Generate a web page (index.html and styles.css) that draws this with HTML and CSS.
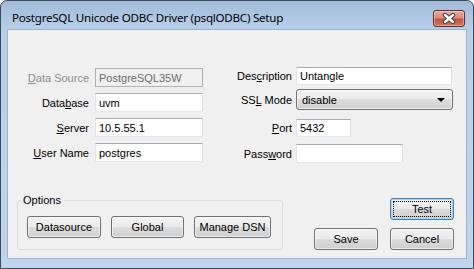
FILE: index.html
```html
<!DOCTYPE html>
<html lang="en">
<head>
    <meta charset="UTF-8">
    <title>PostgreSQL Unicode ODBC Driver (psqlODBC) Setup</title>
    <link rel="stylesheet" href="styles.css">
</head>
<body>
    <div class="window">
        <div class="titlebar">
            <span class="title">PostgreSQL Unicode ODBC Driver (psqlODBC) Setup</span>
            <div class="close">
                <svg width="14" height="11" viewBox="0 0 14 11">
                    <path d="M3 2 L11 9 M11 2 L3 9" stroke="#4b4040" stroke-width="4.4" stroke-linecap="round"/>
                    <path d="M3 2 L11 9 M11 2 L3 9" stroke="#fff" stroke-width="2.4" stroke-linecap="round"/>
                </svg>
            </div>
        </div>

        <div class="client">
            <div class="form">
                <div class="fields left">
                    <div class="row">
                        <span class="label disabled"><u>D</u>ata Source</span>
                        <div class="field wide is-disabled">PostgreSQL35W</div>
                    </div>
                    <div class="row">
                        <span class="label">Data<u>b</u>ase</span>
                        <div class="field wide">uvm</div>
                    </div>
                    <div class="row">
                        <span class="label"><u>S</u>erver</span>
                        <div class="field wide">10.5.55.1</div>
                    </div>
                    <div class="row">
                        <span class="label"><u>U</u>ser Name</span>
                        <div class="field wide">postgres</div>
                    </div>
                </div>

                <div class="fields right">
                    <div class="row desc">
                        <span class="label">Des<u>c</u>ription</span>
                        <div class="field long">Untangle</div>
                    </div>
                    <div class="row ssl">
                        <span class="label">SS<u>L</u> Mode</span>
                        <div class="select">
                            <span>disable</span>
                            <span class="arrow"></span>
                        </div>
                    </div>
                    <div class="row port">
                        <span class="label"><u>P</u>ort</span>
                        <div class="field short">5432</div>
                    </div>
                    <div class="row pass">
                        <span class="label">Pass<u>w</u>ord</span>
                        <div class="field medium"></div>
                    </div>
                </div>
            </div>

            <div class="bottom">
                <fieldset class="options">
                    <legend>Options</legend>
                    <button class="btn ds">Datasource</button>
                    <button class="btn global">Global</button>
                    <button class="btn dsn">Manage DSN</button>
                </fieldset>

                <div class="actions">
                    <button class="btn default">Test</button>
                    <div class="action-row">
                        <button class="btn">Save</button>
                        <button class="btn">Cancel</button>
                    </div>
                </div>
            </div>
        </div>
    </div>
</body>
</html>
```

FILE: styles.css
```css
body {
    margin: 0;
    background-color: #fff;
    font-family: "Liberation Sans", Arial, sans-serif;
    font-size: 11px;
    color: #000;
}

.window {
    width: 474px;
    height: 269px;
    box-sizing: border-box;
    border: 1px solid #3e4a58;
    border-radius: 7px 7px 0 0;
    padding: 0 7px 10px 7px;
    background: linear-gradient(#a2bbd9, #b7cfe9 28px, #bfd5ee);
    display: flex;
    flex-direction: column;
}

.titlebar {
    height: 29px;
    display: flex;
    justify-content: space-between;
    align-items: flex-start;
    padding: 0 1px 0 4px;
}

.title {
    font-family: "Noto Sans", sans-serif;
    font-size: 11.6px;
    letter-spacing: -0.25px;
    line-height: 16px;
    margin-top: 9px;
}

.close {
    width: 32px;
    height: 17px;
    margin-top: 9px;
    box-sizing: border-box;
    border: 1px solid #6e2c24;
    border-radius: 3px;
    background: linear-gradient(#e5aba1, #d98a7a 45%, #c6523f 55%, #d0775f);
    box-shadow: inset 0 0 0 1px rgba(255, 255, 255, 0.35);
    display: flex;
    align-items: center;
    justify-content: center;
}

.client {
    height: 228px;
    background-color: #f0f0f0;
    box-shadow: 0 0 0 1px #9fb3cb;
    display: flex;
    flex-direction: column;
}

.form {
    display: flex;
    padding-top: 37px;
}

.fields {
    display: flex;
    flex-direction: column;
}

.fields.left {
    margin-top: 1px;
    row-gap: 6px;
}

.row {
    display: flex;
    align-items: center;
}

.label {
    text-align: right;
    white-space: nowrap;
}

.left .label {
    width: 81px;
    margin-right: 6px;
}

.right .label {
    width: 89px;
    margin-right: 4px;
}

.label.disabled {
    color: #8d8d8d;
}

.field {
    box-sizing: border-box;
    height: 19px;
    padding: 0 3px;
    background-color: #fff;
    border: 1px solid;
    border-color: #abadb3 #dbdfe6 #e3e9ef #e2e3ea;
    display: flex;
    align-items: center;
}

.field.is-disabled {
    background-color: #f0f0f0;
    border-color: #adb2b5;
    color: #6d6d6d;
}

.field.wide { width: 108px; }
.field.long { width: 156px; height: 18px; }
.field.short { width: 55px; height: 18px; }
.field.medium { width: 107px; }

.row.ssl { margin-top: 4px; }
.row.port { margin-top: 9px; }
.row.pass { margin-top: 7px; }

.select {
    box-sizing: border-box;
    width: 157px;
    height: 21px;
    padding: 0 7px 0 5px;
    border: 1px solid #707070;
    border-radius: 3px;
    background: linear-gradient(#f2f2f2, #ebebeb 50%, #dddddd 50%, #cfcfcf);
    box-shadow: inset 0 0 0 1px rgba(255, 255, 255, 0.6);
    display: flex;
    align-items: center;
    justify-content: space-between;
}

.arrow {
    width: 0;
    height: 0;
    border-left: 4px solid transparent;
    border-right: 4px solid transparent;
    border-top: 4px solid #000;
    margin-top: 1px;
}

.bottom {
    margin-top: auto;
    padding: 0 12px 8px 9px;
    display: flex;
    justify-content: space-between;
    align-items: flex-end;
}

.options {
    box-sizing: border-box;
    width: 266px;
    margin: 0;
    padding: 9px 0 11px 9px;
    border: 1px solid #d5dfe5;
    border-radius: 3px;
    display: flex;
    gap: 10px;
}

.options legend {
    padding: 0 2px;
    margin-left: -6px;
    line-height: 13px;
}

.btn {
    box-sizing: border-box;
    height: 22px;
    padding: 0;
    font-family: inherit;
    font-size: 11px;
    color: #000;
    border: 1px solid #707070;
    border-radius: 3px;
    background: linear-gradient(#f2f2f2, #ebebeb 50%, #dddddd 50%, #cfcfcf);
    box-shadow: inset 0 0 0 1px rgba(255, 255, 255, 0.6);
    width: 64px;
}

.btn.ds { width: 74px; }
.btn.global { width: 73px; }
.btn.dsn { width: 77px; }

.btn.default {
    border-color: #3c7fb1;
    box-shadow: inset 0 0 0 1px #9fd9f5;
    outline: 1px dotted #000;
    outline-offset: -4px;
}

.actions {
    display: flex;
    flex-direction: column;
    align-items: flex-end;
    gap: 8px;
}

.action-row {
    display: flex;
    gap: 12px;
}
```
